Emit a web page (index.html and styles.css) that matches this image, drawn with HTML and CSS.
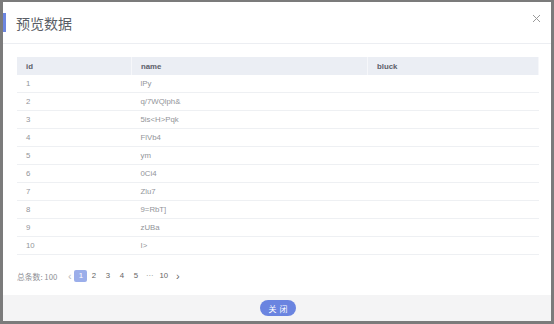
FILE: index.html
```html
<!DOCTYPE html>
<html>
<head>
    <title>预览数据</title>
    <link rel="stylesheet" href="styles.css">
</head>
<body>
    <div class="dialog">
        <div class="dialog-header">
            <span class="title-bar"></span>
            <h2 class="dialog-title">预览数据</h2>
            <span class="dialog-close">
                <svg width="9" height="9" viewBox="0 0 9 9"><path d="M1 1L8 8M8 1L1 8" stroke="#9a9a9a" stroke-width="1" fill="none"/></svg>
            </span>
        </div>
        <div class="dialog-body">
            <table class="data-table">
                <thead>
                    <tr>
                        <th class="col-id">id</th>
                        <th class="col-name">name</th>
                        <th>bluck</th>
                    </tr>
                </thead>
                <tbody id="rows"></tbody>
            </table>
            <div class="pager">
                <span class="pager-total">总条数: 100</span>
                <span class="pager-arrow prev">&lsaquo;</span>
                <span class="pager-num active">1</span>
                <span class="pager-num">2</span>
                <span class="pager-num">3</span>
                <span class="pager-num">4</span>
                <span class="pager-num">5</span>
                <span class="pager-num more">···</span>
                <span class="pager-num">10</span>
                <span class="pager-arrow next">&rsaquo;</span>
            </div>
        </div>
        <div class="dialog-footer">
            <button class="close-btn">关闭</button>
        </div>
    </div>

    <script>
        var data = ['lPy', 'q/7WQlph&', '5is<H>Pqk', 'FlVb4', 'ym', '0Ci4', 'Zlu7', '9=RbT]', 'zUBa', 'I>'];
        var rows = document.getElementById('rows');
        data.forEach(function(name, index) {
            var row = document.createElement('tr');
            var id = document.createElement('td');
            id.textContent = index + 1;
            var nm = document.createElement('td');
            nm.textContent = name;
            var bl = document.createElement('td');
            row.appendChild(id);
            row.appendChild(nm);
            row.appendChild(bl);
            rows.appendChild(row);
        });
    </script>
</body>
</html>
```

FILE: styles.css
```css
body {
    margin: 0;
    background-color: #7b7b7b;
    font-family: "Liberation Sans", Arial, "Noto Sans CJK SC", sans-serif;
}

.dialog {
    margin: 2px 3px 0 3px;
    width: 548px;
    height: 319px;
    background-color: #fff;
    display: flex;
    flex-direction: column;
}

.dialog-header {
    height: 41px;
    border-bottom: 1px solid #eceef2;
    display: flex;
    align-items: center;
    position: relative;
}

.title-bar {
    width: 3px;
    height: 19px;
    background-color: #6d86e0;
    margin-top: -1px;
}

.dialog-title {
    margin: 1px 0 0 10px;
    font-family: "Noto Sans CJK SC", sans-serif;
    font-size: 14px;
    font-weight: normal;
    color: #5a5e66;
}

.dialog-close {
    position: absolute;
    right: 10px;
    top: 12px;
    display: flex;
}

.dialog-body {
    flex: 1;
    padding: 13px 12px 0 14px;
}

.data-table {
    width: 522px;
    border-collapse: collapse;
    font-size: 7.8px;
}

.data-table th, .data-table td {
    height: 17px;
    padding: 0 9px;
    text-align: left;
    border-bottom: 1px solid #eef0f3;
}

.data-table th {
    height: 18px;
    background-color: #ebeef4;
    color: #5c6069;
    font-weight: bold;
    border-right: 1px solid #f6f7fa;
    border-bottom: none;
}

.data-table td {
    color: #929499;
}

.col-id {
    width: 96px;
}

.col-name {
    width: 217px;
}

.pager {
    display: flex;
    align-items: center;
    margin-top: 15px;
    height: 12px;
    font-size: 7.8px;
    color: #777;
}

.pager-total {
    font-family: "Noto Sans CJK SC", sans-serif;
    color: #8e9096;
    margin-right: 8px;
}

.pager-arrow {
    font-size: 11px;
    color: #bbb;
    width: 9px;
    text-align: center;
}

.pager-arrow.next {
    color: #666;
    margin-left: 2px;
}

.pager-num {
    min-width: 13px;
    height: 12px;
    line-height: 12px;
    text-align: center;
    margin-right: 1px;
    color: #666;
}

.pager-num.active {
    background-color: #9baeea;
    color: #fff;
    border-radius: 2px;
    margin-right: 0;
}

.pager-num.more {
    color: #888;
}

.dialog-footer {
    height: 26px;
    background-color: #f4f4f5;
    display: flex;
    justify-content: center;
    align-items: center;
}

.close-btn {
    width: 36px;
    height: 16px;
    border: none;
    border-radius: 8px;
    background-color: #6a84e0;
    color: #fff;
    font-family: "Noto Sans CJK SC", sans-serif;
    font-size: 8px;
    letter-spacing: 3px;
    text-indent: 3px;
    padding: 0;
    margin-left: 2px;
}
```
